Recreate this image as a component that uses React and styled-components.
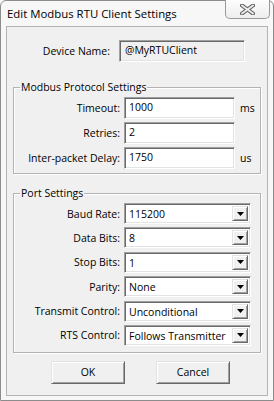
import React from "react";
import styled, { createGlobalStyle } from "styled-components";

const Global = createGlobalStyle`
  html, body { margin: 0; padding: 0; background: #ffffff; }
  * { box-sizing: border-box; }
`;

const FONT = `"Open Sans", "Noto Sans", "Liberation Sans", sans-serif`;

const Window = styled.div`
  width: 274px;
  height: 401px;
  border: 1px solid #8c8c8c;
  border-radius: 6px 6px 0 0;
  background: #f7f7f7;
  display: flex;
  flex-direction: column;
  font-family: ${FONT};
  color: #000;
`;

const TitleBar = styled.div`
  height: 25px;
  display: flex;
  justify-content: space-between;
  align-items: flex-start;
  padding-left: 6px;
  padding-right: 3px;
`;

const Title = styled.div`
  font-size: 11.4px;
  line-height: 25px;
`;

const CloseButton = styled.div`
  width: 45px;
  height: 19px;
  margin-top: -1px;
  border: 1px solid #9a9a9a;
  border-top: none;
  border-radius: 0 0 5px 5px;
  background: linear-gradient(#fdfdfd, #eeeeee);
  display: flex;
  align-items: center;
  justify-content: center;
`;

const Client = styled.div`
  flex: 1;
  margin: 0 5px 4px 5px;
  border: 1px solid #b4b4b4;
  background: #f0f0f0;
  display: flex;
  flex-direction: column;
  font-size: 10.5px;
`;

const Label = styled.span`
  width: ${(p) => p.$w}px;
  flex: none;
  text-align: right;
  white-space: nowrap;
`;

const DeviceRow = styled.div`
  display: flex;
  align-items: center;
  margin-top: 13px;
  gap: 9px;
`;

const sunken = `
  border: 1px solid;
  border-color: #a0a0a0 #ffffff #ffffff #a0a0a0;
  box-shadow: inset 1px 1px 0 #696969, inset -1px -1px 0 #e3e3e3;
`;

const ReadOnlyField = styled.div`
  width: 126px;
  height: 22px;
  ${sunken}
  background: #f0f0f0;
  padding: 0 5px;
  line-height: 19px;
`;

const Group = styled.fieldset`
  margin: ${(p) => p.$top}px 6px 0 6px;
  padding: 3px 0 ${(p) => p.$bottom}px 0;
  border: 1px solid #b3b3b3;
  box-shadow: inset 1px 1px 0 #ffffff, 1px 1px 0 #ffffff;
  display: flex;
  flex-direction: column;
  gap: ${(p) => p.$gap}px;
  min-width: 0;
`;

const Legend = styled.legend`
  margin-left: 6px;
  padding: 0 1px;
  line-height: 14px;
  font-size: 10.5px;
`;

const FieldRow = styled.div`
  display: flex;
  align-items: center;
  gap: 4px;
`;

const TextInput = styled.input`
  width: 111px;
  height: 22px;
  ${sunken}
  background: #ffffff;
  padding: 0 4px 2px 4px;
  font: inherit;
  color: #000;
  outline: none;
`;

const Unit = styled.span`
  margin-left: 1px;
`;

const Combo = styled.div`
  width: 127px;
  height: 21px;
  ${sunken}
  background: #ffffff;
  display: flex;
  align-items: stretch;
  padding: 2px;
`;

const ComboValue = styled.span`
  flex: 1;
  padding-left: 2px;
  line-height: 16px;
  white-space: nowrap;
  overflow: hidden;
`;

const DropButton = styled.div`
  width: 16px;
  flex: none;
  background: #f0f0f0;
  border: 1px solid;
  border-color: #e3e3e3 #696969 #696969 #e3e3e3;
  box-shadow: inset 1px 1px 0 #ffffff, inset -1px -1px 0 #a0a0a0;
  display: flex;
  align-items: center;
  justify-content: center;
`;

const ButtonRow = styled.div`
  display: flex;
  gap: 31px;
  padding-left: 44px;
  margin-top: 8px;
`;

const Button = styled.button`
  width: 74px;
  height: 23px;
  font: inherit;
  color: #000;
  background: #f0f0f0;
  border: 1px solid;
  border-color: #e3e3e3 #696969 #696969 #e3e3e3;
  box-shadow: inset 1px 1px 0 #ffffff, inset -1px -1px 0 #a0a0a0;
  padding: 0 0 1px 0;
`;

const Arrow = () => (
  <svg width="7" height="4" viewBox="0 0 7 4">
    <polygon points="0,0 7,0 3.5,4" fill="#000" />
  </svg>
);

const CloseX = () => (
  <svg width="15" height="11" viewBox="0 0 15 11">
    <path d="M2 1.5 L13 9.5 M13 1.5 L2 9.5" stroke="#5f5f5f" strokeWidth="4" strokeLinecap="round" />
    <path d="M2 1.5 L13 9.5 M13 1.5 L2 9.5" stroke="#ececec" strokeWidth="2" strokeLinecap="round" />
  </svg>
);

const protocol = [
  { label: "Timeout:", value: "1000", unit: "ms" },
  { label: "Retries:", value: "2", unit: "" },
  { label: "Inter-packet Delay:", value: "1750", unit: "us" },
];

const port = [
  ["Baud Rate:", "115200"],
  ["Data Bits:", "8"],
  ["Stop Bits:", "1"],
  ["Parity:", "None"],
  ["Transmit Control:", "Unconditional"],
  ["RTS Control:", "Follows Transmitter"],
];

export default function App() {
  return (
    <>
      <Global />
      <Window>
        <TitleBar>
          <Title>Edit Modbus RTU Client Settings</Title>
          <CloseButton>
            <CloseX />
          </CloseButton>
        </TitleBar>
        <Client>
          <DeviceRow>
            <Label $w={103}>Device Name:</Label>
            <ReadOnlyField>@MyRTUClient</ReadOnlyField>
          </DeviceRow>
          <Group $top={18} $bottom={4} $gap={3}>
            <Legend>Modbus Protocol Settings</Legend>
            {protocol.map((r) => (
              <FieldRow key={r.label}>
                <Label $w={106}>{r.label}</Label>
                <TextInput readOnly defaultValue={r.value} />
                <Unit>{r.unit}</Unit>
              </FieldRow>
            ))}
          </Group>
          <Group $top={12} $bottom={6} $gap={3.4}>
            <Legend>Port Settings</Legend>
            {port.map(([l, v]) => (
              <FieldRow key={l}>
                <Label $w={106}>{l}</Label>
                <Combo>
                  <ComboValue>{v}</ComboValue>
                  <DropButton>
                    <Arrow />
                  </DropButton>
                </Combo>
              </FieldRow>
            ))}
          </Group>
          <ButtonRow>
            <Button>OK</Button>
            <Button>Cancel</Button>
          </ButtonRow>
        </Client>
      </Window>
    </>
  );
}
